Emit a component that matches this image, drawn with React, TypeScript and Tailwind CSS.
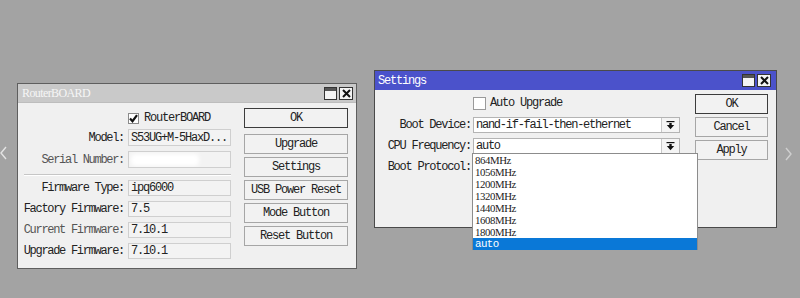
import React from "react";

const mono = { fontFamily: '"Liberation Mono", "DejaVu Sans Mono", monospace' };

function TitleButtons() {
  return (
    <div className="flex items-center gap-[2px]">
      <div className="w-[13px] h-[13px] border border-[#333] bg-[#f4f4f4] flex flex-col">
        <div className="h-[3px] bg-[#555]" />
      </div>
      <div className="w-[14px] h-[13px] border border-[#333] bg-[#f4f4f4] flex items-center justify-center">
        <svg width="9" height="9" viewBox="0 0 9 9">
          <path d="M1 1 L8 8 M8 1 L1 8" stroke="#111" strokeWidth="2" />
        </svg>
      </div>
    </div>
  );
}

function Btn({ children, strong }: { children: React.ReactNode; strong?: boolean }) {
  return (
    <div
      className={`h-5 flex items-center justify-center whitespace-nowrap bg-[#f2f2f2] text-[#222] text-[12px] tracking-[-1.2px] border ${
        strong ? "border-[#3c3c3c]" : "border-[#a6a6a6]"
      }`}
    >
      {children}
    </div>
  );
}

function LRow({ label, value, h = "h-4", dim }: { label: string; value?: React.ReactNode; h?: string; dim?: boolean }) {
  return (
    <div className={`flex items-center ${h}`}>
      <div className={`w-[100px] flex justify-end whitespace-nowrap text-[12px] tracking-[-1.3px] ${dim ? "text-[#555]" : "text-[#222]"}`}>
        <span>{label}</span>
      </div>
      <div className={`ml-[4px] w-[103px] ${h} border border-[#cfcfcf] bg-[#f3f3f3] flex items-center pl-[2px] whitespace-nowrap text-[12px] tracking-[-1.2px] text-[#222] overflow-hidden relative`}>
        {value}
      </div>
    </div>
  );
}

function DropIcon() {
  return (
    <svg width="9" height="9" viewBox="0 0 9 9">
      <rect x="0.5" y="0" width="8" height="1.2" fill="#111" />
      <rect x="3.3" y="2" width="2.4" height="2.5" fill="#111" />
      <polygon points="0.8,4 8.2,4 4.5,8.2" fill="#111" />
    </svg>
  );
}

function RRow({ label, value, combo }: { label: string; value?: string; combo?: boolean }) {
  return (
    <div className="flex items-center h-4">
      <div className="w-[88px] flex justify-end whitespace-nowrap text-[12px] tracking-[-1.25px] text-[#222]">
        <span>{label}</span>
      </div>
      {combo !== undefined && (
        <div className="ml-[2px] w-[207px] h-4 flex border border-[#b4b4b4] bg-white">
          <div className="flex-1 flex items-center pl-[2px] whitespace-nowrap text-[12px] tracking-[-1.25px] text-[#222]">{value}</div>
          <div className="w-[18px] border-l border-[#c8c8c8] bg-[#f4f4f4] flex items-center justify-center">
            <DropIcon />
          </div>
        </div>
      )}
    </div>
  );
}

export default function App() {
  const freqs = ["864MHz", "1056MHz", "1200MHz", "1320MHz", "1440MHz", "1608MHz", "1800MHz"];
  return (
    <div className="relative w-[800px] h-[298px] bg-[#a3a3a3] overflow-hidden" style={mono}>
      {/* side chevrons */}
      <div className="absolute left-[0px] top-[146px]">
        <svg width="8" height="14" viewBox="0 0 8 14"><path d="M6 1 L1 7 L6 13" stroke="#e4e4e4" strokeWidth="1.4" fill="none" /></svg>
      </div>
      <div className="absolute left-[784px] top-[147px]">
        <svg width="8" height="14" viewBox="0 0 8 14"><path d="M2 1 L7 7 L2 13" stroke="#cfcfcf" strokeWidth="1.4" fill="none" /></svg>
      </div>

      {/* RouterBOARD window */}
      <div className="absolute left-[17px] top-[83px] w-[340px] h-[186px] border border-[#5e5e5e] bg-[#f0f0f0] flex flex-col">
        <div className="h-[18px] bg-[#c9c9c9] flex items-center justify-between pl-[4px] pr-[3px]">
          <span
            className="text-[#f6f6f6] text-[12px] tracking-[-0.6px]"
            style={{ fontFamily: '"Liberation Serif", "Times New Roman", serif' }}
          >
            RouterBOARD
          </span>
          <TitleButtons />
        </div>
        <div className="flex flex-1 border-t border-[#bdbdbd]">
          <div className="pl-[6px] pt-[9px] flex flex-col">
            <div className="flex items-center h-3">
              <div className="w-[104px]" />
              <div className="w-[11px] h-[11px] border border-[#8a8a8a] bg-white flex items-center justify-center">
                <svg width="9" height="9" viewBox="0 0 9 9"><path d="M1 4.5 L3.5 7.2 L8 1.2" stroke="#111" strokeWidth="2.2" fill="none" /></svg>
              </div>
              <span className="ml-[5px] text-[12px] tracking-[-1.2px] text-[#222]">RouterBOARD</span>
            </div>
            <div className="mt-[5px] flex flex-col gap-[5px]">
              <LRow label="Model:" value="S53UG+M-5HaxD..." h="h-[17px]" />
              <LRow
                label="Serial Number:"
                h="h-[17px]"
                dim
                value={<div className="absolute left-[2px] top-[2px] w-[68px] h-[12px] bg-white rounded-sm blur-[2px]" />}
              />
            </div>
            <div className="mt-[6px] w-[207px] h-[2px] border-t border-[#c6c6c6] border-b border-b-white" />
            <div className="mt-[4px] flex flex-col gap-[5px]">
              <LRow label="Firmware Type:" value="ipq6000" />
              <LRow label="Factory Firmware:" value="7.5" />
              <LRow label="Current Firmware:" value="7.10.1" dim />
              <LRow label="Upgrade Firmware:" value="7.10.1" />
            </div>
          </div>
          <div className="ml-[13px] w-[104px] pt-[5px] flex flex-col gap-[3px]">
            <div className="mb-[3px]"><Btn strong>OK</Btn></div>
            <Btn>Upgrade</Btn>
            <Btn>Settings</Btn>
            <Btn>USB Power Reset</Btn>
            <Btn>Mode Button</Btn>
            <Btn>Reset Button</Btn>
          </div>
        </div>
      </div>

      {/* Settings window */}
      <div className="absolute left-[374px] top-[70px] w-[403px] h-[158px] border border-[#4a4a4a] bg-[#f0f0f0] flex flex-col">
        <div className="h-[19px] bg-[#4b52cb] flex items-center justify-between pl-[3px] pr-[5px]">
          <span className="text-white text-[12px] tracking-[-1.2px]">Settings</span>
          <TitleButtons />
        </div>
        <div className="flex flex-1">
          <div className="pl-[8px] pt-[6px] flex flex-col">
            <div className="flex items-center h-[14px]">
              <div className="w-[90px]" />
              <div className="w-[13px] h-[13px] border border-[#9a9a9a] bg-white" />
              <span className="ml-[4px] text-[12px] tracking-[-1.2px] text-[#222]">Auto Upgrade</span>
            </div>
            <div className="mt-[7px] flex flex-col gap-[5px]">
              <RRow label="Boot Device:" value="nand-if-fail-then-ethernet" combo />
              <RRow label="CPU Frequency:" value="auto" combo />
              <RRow label="Boot Protocol:" />
            </div>
          </div>
          <div className="ml-[15px] w-[73px] pt-[4px] flex flex-col gap-[3px]">
            <Btn strong>OK</Btn>
            <Btn>Cancel</Btn>
            <Btn>Apply</Btn>
          </div>
        </div>
      </div>

      {/* CPU frequency dropdown list */}
      <div className="absolute left-[472px] top-[153px] w-[226px] h-[97px] bg-white border border-[#8c8c8c] flex flex-col">
        {freqs.map((f) => (
          <div
            key={f}
            className="h-3 flex items-center pl-[2px] text-[10.8px] leading-[12px] tracking-[-0.4px] text-[#222] whitespace-nowrap"
            style={{ fontFamily: '"Liberation Serif", "Times New Roman", serif' }}
          >
            {f}
          </div>
        ))}
        <div className="h-3 flex items-center pl-[2px] bg-[#0a78d7] text-white text-[10.8px] leading-[12px] tracking-[-0.6px]">auto</div>
      </div>
    </div>
  );
}
